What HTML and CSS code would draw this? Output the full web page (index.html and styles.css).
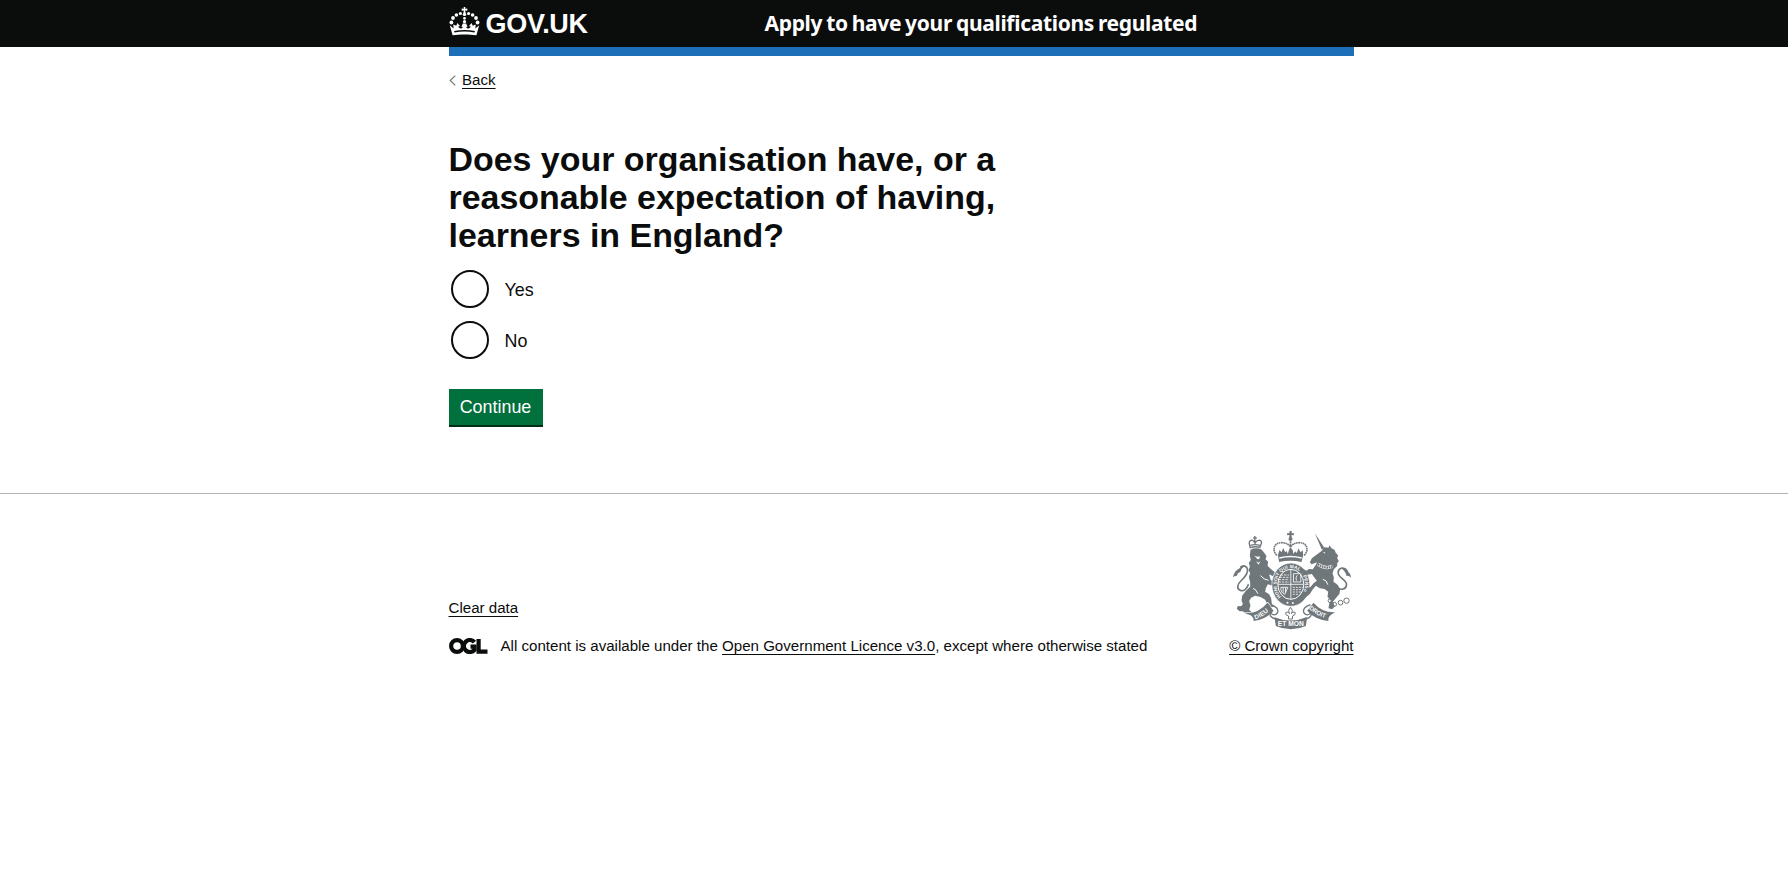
FILE: index.html
```html
<!DOCTYPE html>
<html lang="en">
<head>
<meta charset="utf-8">
<title>Apply to have your qualifications regulated</title>
<link rel="stylesheet" href="styles.css">
</head>
<body>
<header class="header">
  <div class="container header-row">
    <a class="brand" href="#">
      <svg class="crown" viewBox="0 0 31 30" aria-hidden="true">
        <g fill="#fff">
          <circle cx="2.400" cy="15.500" r="1.900"/><circle cx="4" cy="11" r="1.900"/><circle cx="7.400" cy="8" r="1.800"/><circle cx="11.400" cy="6.500" r="1.600"/>
          <circle cx="28.600" cy="15.500" r="1.900"/><circle cx="27" cy="11" r="1.900"/><circle cx="23.600" cy="8" r="1.800"/><circle cx="19.600" cy="6.500" r="1.600"/>
          <circle cx="15.500" cy="11.300" r="1.400"/><circle cx="15.500" cy="14.700" r="1.600"/>
          <path d="M14.600 0h1.800l-.3 1.800 2.200-.4v2.400l-2.200-.4.7 3.200c1.100.8.6 2.500-1.300 2.500s-2.400-1.700-1.300-2.500l.7-3.200-2.200.4V1.400l2.200.4z"/>
          <path d="M3.600 28.300.800 18.300l3.800 3.200-.3-3.900 3 1.200 1-2.800 2.700 3-1.800.8c1.500 2.500 4.200 2 4.700-.1l-1.500.2 1.400-3.400h3.400l1.400 3.400-1.500-.2c.5 2.100 3.200 2.600 4.700.1l-1.800-.8 2.700-3 1 2.800 3-1.200-.3 3.900 3.800-3.200-2.800 10c-7-1.200-16.800-1.200-23.800 0zM5.500 25.500c6.500-1.300 13.500-1.300 20 0l.4-1.600c-6.500-1.300-14.300-1.300-20.800 0z" fill-rule="evenodd"/>
        </g>
      </svg>
      <span class="wordmark">GOV.UK</span>
    </a>
    <a class="service" href="#">Apply to have your qualifications regulated</a>
  </div>
</header>
<div class="container">
  <div class="bar"></div>
  <a class="back" href="#"><svg class="chevron" viewBox="0 0 7 11"><path d="M6.300.6 1.200 5.500l5.100 4.900" fill="none" stroke="#777" stroke-width="1.200"/></svg><span class="link">Back</span></a>
  <main class="main">
    <h1 class="title">Does your organisation have, or a<br>reasonable expectation of having,<br>learners in England?</h1>
    <label class="option"><input class="radio" type="radio" name="answer"><span>Yes</span></label>
    <label class="option"><input class="radio" type="radio" name="answer"><span>No</span></label>
    <button class="continue" type="button">Continue</button>
  </main>
</div>
<footer class="footer">
  <div class="container footer-row">
    <div class="meta">
      <a class="link clear" href="#">Clear data</a>
      <div class="licence">
        <svg class="ogl" viewBox="0 0 39 16"><g fill="none" stroke="#0b0c0c" stroke-width="4.200"><circle cx="8" cy="8" r="5.900"/><path d="M25.500 4.200A6 6 0 1 0 25.500 11.800V8.600h-4"/><path d="M29.600 1v12.700H38.500"/></g></svg>
        <span class="licence-text">All content is available under the <a class="link" href="#">Open Government Licence v3.0</a>, except where otherwise stated</span>
      </div>
    </div>
    <div class="copyright">
      <svg class="crest" viewBox="25.500 12 375 306" aria-hidden="true">
        <defs>
          <path id="motto" d="M182 216A43 50 0 1 1 240 216"/>
          <path id="ribbon-left" d="M104 283Q131 275 152 251"/>
          <path id="ribbon-right" d="M265 251Q288 273 324 282"/>
        </defs>
        <!-- lion -->
        <path fill="#6f777b" d="M90 74q16-8 32-1l9 10 7 10-3 10 8 7-2 12 10 10 12 10-5 12-12-6 4 16 10 8-4 10-14-4-6 12-2 10 12 8 6 12 2 16 6 9-16 3-4-10-6-14-14-8-16-4-12 6-6 10 4 14-4 12 9 9-4 6-14-2-10-8-10 0-8-8 2-7 12-1 4-6-4-11 2-14 10-13 14-14 0-14-4-14 4-12-5-10 4-10-3-12 6-8-3-12z"/>
        <g fill="none" stroke="#6f777b" stroke-width="5">
          <path d="M84 178c-5 16-16 22-25 18-11-5-9-18 2-28 13-12 22-22 20-35-2-11-13-13-22-6"/>
        </g>
        <path fill="#6f777b" d="M38 157q2-18 17-26 9-9 18-9-11 8-13 18-9 3-12 13-5-1-10 4z"/>
        <path d="M101 92l10 3 7-1-1 7-6 2-5-6zM106 108l7 5 7-4-6 10z" fill="#fff"/>
        <path d="M120 152q10 12 24 14M98 190q10 4 14 16" fill="none" stroke="#fff" stroke-width="3"/>
        <g fill="none" stroke="#6f777b" stroke-width="4">
          <path d="M89 68l-3-14q1-10 10-8 7 3 8 10 2-9 9-10 11-2 10 8l-5 13q-15-4-28 1zM90 61q14-4 28 0M103 33v23M98 39h11"/>
        </g>
        <!-- centre crown -->
        <g fill="#6f777b">
          <path d="M207 18h7l-1 7 7-1v7l-7-1 1 8h-8l1-8-7 1v-7l7 1z"/>
          <circle cx="210" cy="42" r="6"/>
          <path fill-rule="evenodd" d="M172 91l5-16 6 7 5-13 6 13 5-4 3 10 3-12 5-8 7 8 2 11 5-8 5 5 5-14 6 12 7-6 1 15-5 20q-33-8-67 0zM176 97q34-9 68 0l-1 4q-32-8-66 0z"/>
        </g>
        <g fill="none" stroke="#6f777b" stroke-width="5" stroke-dasharray="5 1.500">
          <path d="M169 91c-16-17-8-38 14-38 12 0 21 5 27 12 6-7 15-12 27-12 22 0 30 21 14 38M210 49v27"/>
        </g>
        <!-- shield and garter -->
        <ellipse cx="211" cy="179" rx="57" ry="65" fill="#6f777b" stroke="#fff" stroke-width="2"/>
        <ellipse cx="211" cy="178" rx="39" ry="45" fill="#6f777b" stroke="#fff" stroke-width="3"/>
        <g fill="none" stroke="#fff" stroke-width="2.500">
          <path d="M211 134v88M173 178h76"/>
          <path d="M181 150h25M177 157h29M175 164h31M174 171h32" stroke-dasharray="7 3"/>
          <path d="M217 187h29M217 194h27M217 201h25M217 208h18" stroke-dasharray="6 3"/>
          <path d="M219 146h22v25h-22zM228 167q-4-9 2-16M181 187q-1 16 12 21l9-21zM188 187v16M195 187v16"/>
        </g>
        <g class="crest-lettering" fill="#fff">
          <text font-size="14"><textPath href="#motto" textLength="208">HONI SOIT QUI MAL Y PENSE</textPath></text>
          <circle cx="201" cy="233" r="3"/><circle cx="217" cy="234" r="3"/>
        </g>
        <!-- unicorn -->
        <path d="M283 25l29 44-8 5z" fill="#6f777b"/>
        <path fill="#6f777b" d="M303 78l9-11 12 1 3-7 6 9 9 4 4 10 7 7-3 9 5 8-5 7 0 8-10 10-4 12 4 12-1 13 12 9 8 13-2 14-10 12-10 12 6 14-8 9-11-3 2-14 5-9-10-12 2-15-11-8-14-2-12-8-10 12-8 13-10 8-9-2 10-14-4-8 15-5 10-12 9-7-7-9-8-11-13 2-11-6-10 3-4-7 12-6 10 4 7-5 12 1 8-12 5-9-6 2-11 4-5-6 6-12z"/>
        <path d="M309 82l5 2M322 179q-3-14-15-16" fill="none" stroke="#fff" stroke-width="3"/>
        <path d="M292 117q22 17 44 7" fill="none" stroke="#fff" stroke-width="10"/>
        <g fill="none" stroke="#6f777b">
          <path stroke-width="7" d="M292 117q22 17 44 7" stroke-dasharray="5 2"/>
          <path stroke-width="5" d="M345 183c12 15 32 12 33-4 1-14-26-21-25-37 1-12 14-17 23-9"/>
          <circle cx="329" cy="227" r="6" stroke-width="3"/><circle cx="342" cy="238" r="6" stroke-width="3"/><circle cx="360" cy="233" r="7" stroke-width="3"/><circle cx="378" cy="227" r="8" stroke-width="3"/>
        </g>
        <path fill="#6f777b" d="M361 129q20-2 23 13 8 5 8 16-8-7-14-5-2-14-17-24z"/>
        <!-- ribbon -->
        <path d="M72 264q40 2 69-33l17 23M348 262q-40 2-69-31l-18 23" fill="none" stroke="#fff" stroke-width="3"/>
        <g fill="#6f777b">
          <path d="M76 264q38 2 65-31l18 24q-22 27-60 31 3-15-23-24zM344 262q-38 2-65-29l-19 24q22 26 64 31-4-15 20-26z"/>
          <path d="M162 277q48 20 98-1l-4 27q-45 20-90 0z"/>
        </g>
        <path d="M151 239c16 5 24 14 20 24-5 9-14 8-19 2-7 3-1 14 13 17M270 239c-16 5-24 14-20 24 5 9 14 8 19 2 7 3 1 14-13 17" fill="none" stroke="#6f777b" stroke-width="4"/>
        <path d="M210 247q10 9 3 19 4-8 11-4 3 8-8 11v9h-12v-9q-12-3-8-11 7-4 11 4-7-11 3-19z" fill="#fff" stroke="#6f777b" stroke-width="3"/>
        <g class="crest-lettering" fill="#fff" font-size="19">
          <text><textPath href="#ribbon-left" textLength="48">DIEU</textPath></text>
          <text x="172" y="304" font-size="20" textLength="78">ET MON</text>
          <text><textPath href="#ribbon-right" textLength="57" lengthAdjust="spacingAndGlyphs">DROIT</textPath></text>
        </g>
      </svg>
      <a class="link copy" href="#">© Crown copyright</a>
    </div>
  </div>
</footer>
</body>
</html>
```

FILE: styles.css
```css
* { box-sizing: border-box; }
body { margin: 0; background: #fff; color: #0b0c0c; font: 15.100px/20px "Liberation Sans", Arial, sans-serif; }
a { color: inherit; text-decoration: none; }
.container { width: 905px; margin: 0 0 0 448.500px; }
.header { height: 47px; background: #0b0c0c; color: #fff; }
.header-row { display: flex; align-items: flex-start; }
.brand { display: flex; width: 316px; padding-top: 6.500px; }
.crown { width: 31px; height: 30px; }
.wordmark { margin-left: 6px; font-weight: 700; font-size: 27px; line-height: 34px; white-space: nowrap; letter-spacing: -0.300px; }
.service { padding-top: 9px; font-family: "Noto Sans", sans-serif; font-weight: 700; font-size: 21px; line-height: 28px; letter-spacing: -0.320px; word-spacing: -1.200px; white-space: nowrap; }
.bar { height: 9px; background: #1d70b8; }
.back { display: flex; align-items: center; width: 60px; height: 20px; margin-top: 14px; }
.chevron { width: 7px; height: 11px; margin-right: 6.500px; }
.link { text-decoration: underline; text-decoration-thickness: 1px; text-underline-offset: 3px; }
.main { padding-top: 51px; }
.title { margin: 0 0 16px; font-size: 33.930px; line-height: 37.800px; font-weight: 700; white-space: nowrap; }
.option { display: flex; align-items: center; height: 38px; margin: 0 0 13px 2px; gap: 16px; font-size: 17.900px; }
.option span { padding-top: 1px; }
.radio { appearance: none; width: 38px; height: 38px; margin: 0; border: 2px solid #0b0c0c; border-radius: 50%; }
.continue { display: block; width: 94px; height: 38px; margin-top: 30px; padding: 1px 0 0; border: 0; border-bottom: 2px solid #002d18; background: #00703c; color: #fff; font: 17.900px/35px "Liberation Sans", Arial, sans-serif; }
.footer { margin-top: 66px; border-top: 1px solid #b1b4b6; padding-top: 35px; }
.footer-row { display: flex; justify-content: space-between; }
.meta { padding-top: 69px; }
.licence { display: flex; align-items: center; margin-top: 18px; white-space: nowrap; }
.ogl { width: 39px; height: 16px; margin-right: 13px; }
.copyright { display: flex; flex-direction: column; align-items: flex-end; }
.crest { width: 125px; height: 102px; margin-bottom: 5px; }
.crest-lettering { font-family: "Liberation Sans", Arial, sans-serif; font-weight: 700; }
```
